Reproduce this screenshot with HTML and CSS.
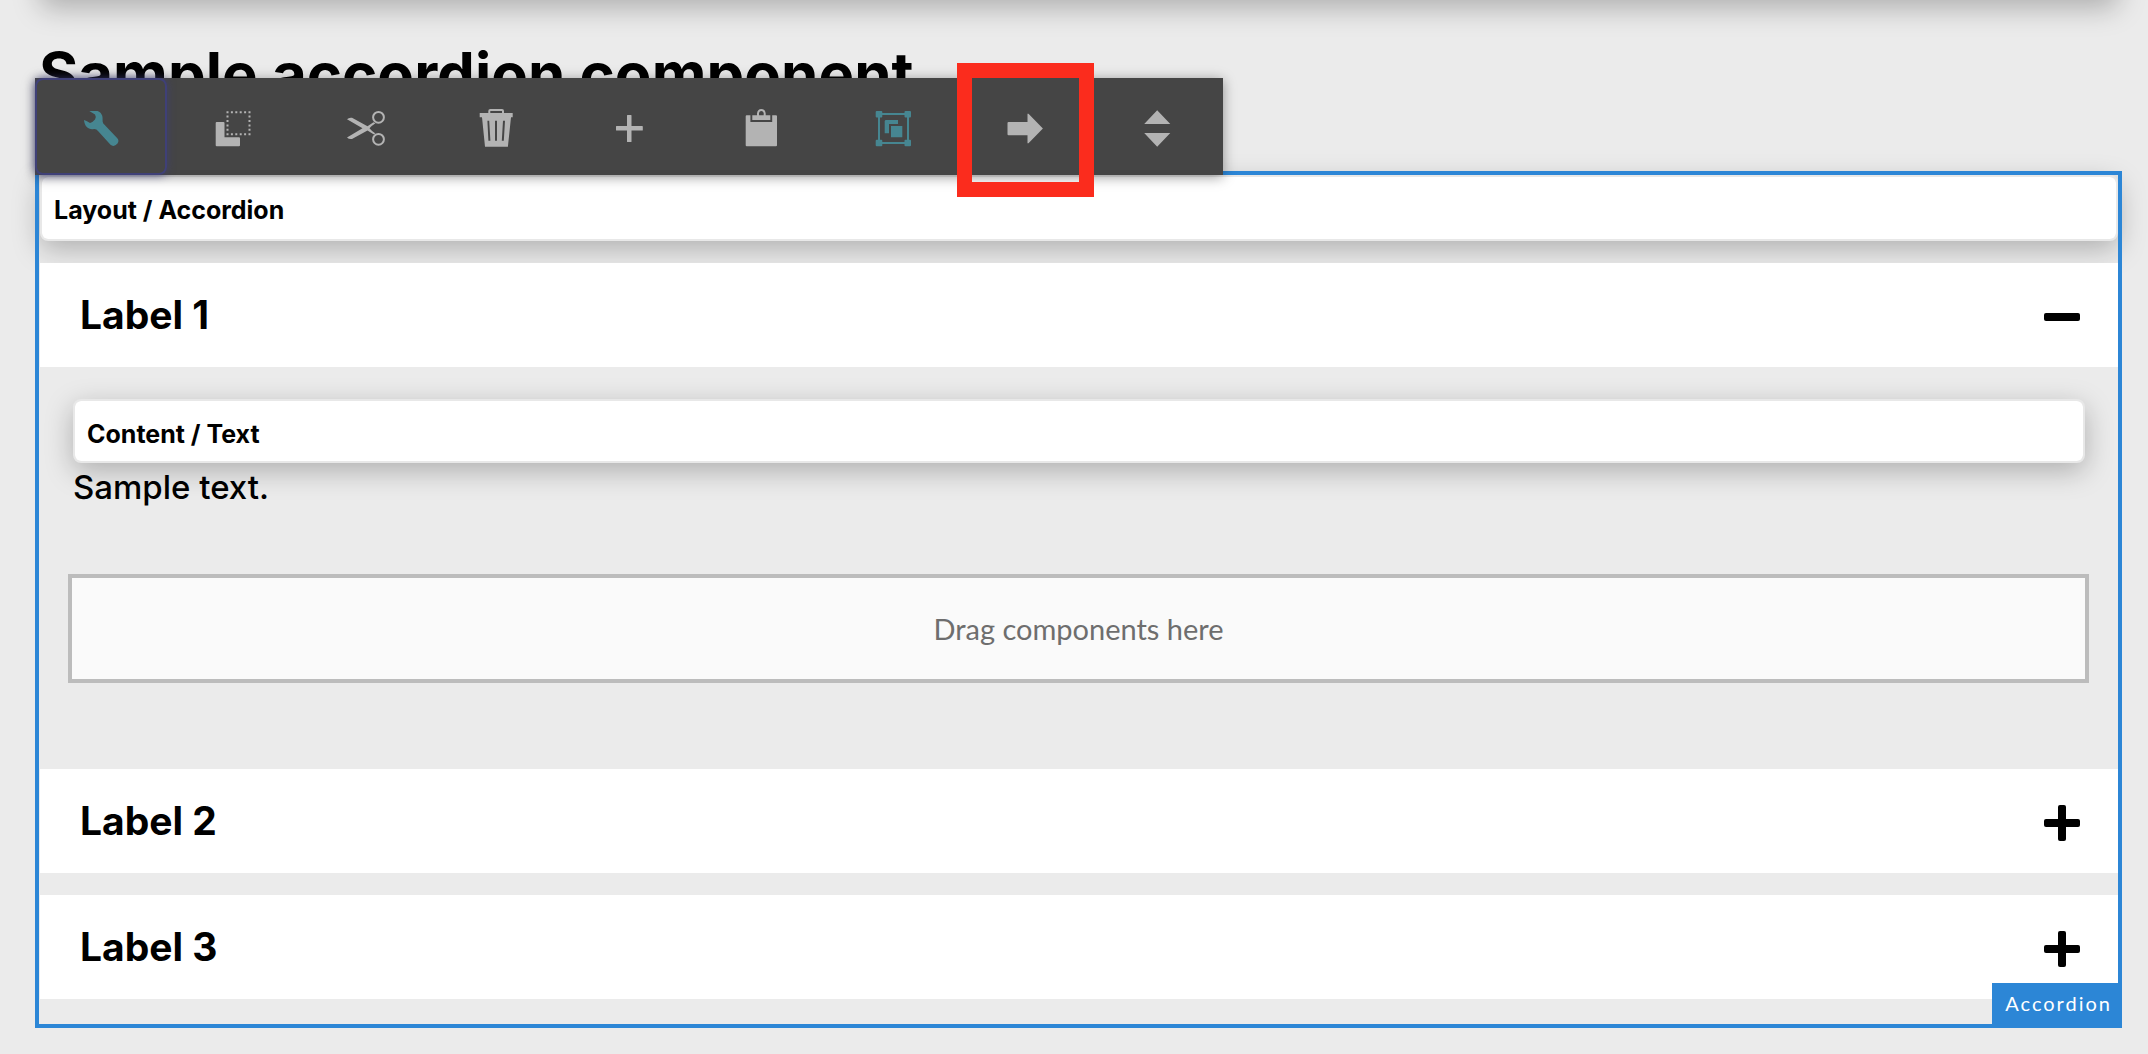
FILE: index.html
```
<!DOCTYPE html>
<html lang="en">

<head>
    <meta charset="utf-8">
    <title>Sample accordion component</title>
    <meta name="viewport" content="width=device-width, initial-scale=1.0">
    <link rel="stylesheet" href="styles.css">
</head>

<body>
    <div class="previous-card"></div>
    <h1 class="title">Sample accordion component</h1>

    <main class="frame">
        <div class="toolbar" role="toolbar" aria-label="Component actions">
            <button class="tool active focused" aria-label="Configure">
                <svg viewBox="0 0 40 40"><path d="M8.3 3H15.500C18.500 3 20.500 5.500 21.300 8C22 10.500 21 13 22.300 15.500L36.300 30.300Q38.500 32.500 36.500 35.500Q33 39.500 29.500 36.800L17 23Q15.500 20.800 13 21C7.500 22 3.500 18.500 3 12Q6 13.200 9 14.900Q11.500 14.500 14 11.500Q15.500 8.500 14 6.500Z"/></svg>
            </button>
            <button class="tool" aria-label="Copy">
                <svg viewBox="0 0 40 40"><path d="M3.700 14H10.500Q11.500 14 11.500 15V29.300H26Q27 29.300 27 30.300V37.300Q27 38.300 26 38.300H3.700Q2.700 38.300 2.700 37.300V15Q2.700 14 3.700 14Z"/><rect class="line" x="14.500" y="4.200" width="22" height="22" stroke-dasharray="2 2.400" stroke-dashoffset="1"/></svg>
            </button>
            <button class="tool" aria-label="Cut">
                <svg viewBox="0 0 40 40"><circle class="line" cx="33.500" cy="9.300" r="5.400"/><circle class="line" cx="33.500" cy="31.300" r="5.400"/><path d="M2 11.200Q4 9.300 7 9.800L22.500 18.300L28.500 14.300L30.500 15.200Q26 18 24.500 20.300Q26 22.600 30.500 25.400L28.500 26.300L22.500 22.500L7 31Q4 31.500 2 29.600L17.500 20.300Z"/></svg>
            </button>
            <button class="tool" aria-label="Delete">
                <svg viewBox="0 0 40 40"><path class="line" d="M12.300 5V3Q12.300 2 13.300 2H25Q26 2 26 3V5"/><path fill-rule="evenodd" d="M2.700 5H35.700V9.300H34L30.900 38.700H8L5 9.300H2.700ZM10.400 12.800L11.400 32.800H13.400L12.200 12.800ZM18 12.800V32.800H20V12.800ZM26 12.800L24.800 32.800H26.800L28 12.800Z"/></svg>
            </button>
            <button class="tool" aria-label="Insert">
                <svg viewBox="0 0 40 40"><path d="M18 7.500Q18 7 18.500 7H22Q22.500 7 22.500 7.500V18H33.200Q33.800 18 33.800 18.500V22Q33.800 22.500 33.200 22.500H22.500V33.500Q22.500 34 22 34H18.500Q18 34 18 33.500V22.500H7.500Q7 22.500 7 22V18.500Q7 18 7.500 18H18Z"/></svg>
            </button>
            <button class="tool" aria-label="Paste">
                <svg viewBox="0 0 40 40"><path fill-rule="evenodd" d="M5.500 7.300H9.400V14H31.200V7.300H35Q36 7.300 36 8.300V37.300Q36 38.300 35 38.300H5.700Q4.700 38.300 4.700 37.300V8.300Q4.700 7.300 5.700 7.300ZM11.300 7.300H16V5.500Q16.500 1 20.300 1Q24.200 1 24.700 5.500V7.300H29.300V12H11.300ZM18 7.300H22.700V5Q22 3 20.300 3Q18.500 3 18 5Z"/></svg>
            </button>
            <button class="tool active" aria-label="Group">
                <svg viewBox="0 0 40 40"><rect class="line" x="6" y="6" width="29" height="29"/><path d="M3.700 3h4.600q1 0 1 1v4.500q0 1-1 1H3.700q-1 0-1-1V4q0-1 1-1ZM32.500 3h4.500q1 0 1 1v4.500q0 1-1 1h-4.500q-1 0-1-1V4q0-1 1-1ZM3.700 31.700h4.600q1 0 1 1v4.500q0 1-1 1H3.700q-1 0-1-1v-4.500q0-1 1-1ZM32.500 31.700h4.500q1 0 1 1v4.500q0 1-1 1h-4.500q-1 0-1-1v-4.500q0-1 1-1ZM12.500 12H25V16H16V25.300H11.700V13ZM18 18H29.300V29.300H18Z"/></svg>
            </button>
            <button class="tool highlighted" aria-label="Parent">
                <svg viewBox="0 0 40 40"><path d="M3.500 14H22.500V5.700H23.500L37.900 20.400L23.500 35.300H22.500V27.300H3.500Q2.500 27.300 2.500 26.300V15Q2.500 14 3.500 14Z"/></svg>
            </button>
            <button class="tool" aria-label="Reorder">
                <svg viewBox="0 0 40 40"><path d="M20.200 2.300L33.300 16H7.200ZM7.200 25H33.300L20.200 38.700Z"/></svg>
            </button>
        </div>

        <div class="tag tag-layout">Layout / Accordion</div>

        <div class="accordion">
            <button class="item" aria-expanded="true">
                Label 1
                <svg class="sign" viewBox="0 0 36 40"><rect y="18" width="36" height="8" rx="2"/></svg>
            </button>
            <div class="panel">
                <div class="tag tag-text">Content / Text</div>
                <p class="text">Sample text.</p>
                <div class="dropzone">Drag components here</div>
            </div>
            <button class="item" aria-expanded="false">
                Label 2
                <svg class="sign" viewBox="0 0 36 40"><rect y="18" width="36" height="8" rx="2"/><rect x="14" y="4" width="8" height="36" rx="2"/></svg>
            </button>
            <button class="item" aria-expanded="false">
                Label 3
                <svg class="sign" viewBox="0 0 36 40"><rect y="18" width="36" height="8" rx="2"/><rect x="14" y="4" width="8" height="36" rx="2"/></svg>
            </button>
        </div>

        <span class="badge">Accordion</span>
    </main>
</body>

</html>
```
FILE: styles.css
```
* {
    box-sizing: border-box;
    margin: 0;
    padding: 0;
}

body {
    display: flex;
    flex-direction: column;
    padding: 0 26px 26px 35px;
    background: #ebebeb;
    color: #000;
    font-family: Inter, "Liberation Sans", sans-serif;
}

button {
    border: none;
    font: inherit;
    color: inherit;
    cursor: pointer;
}

/* only the shadow of this card reaches into view */
.previous-card {
    height: 64px;
    margin: -64px 4px 0 5px;
    border-radius: 8px;
    box-shadow: 0 8px 28px rgba(0, 0, 0, 0.26);
}

.title {
    margin: 38px 0 61px 4px;
    font-size: 60px;
    line-height: 72px;
    font-weight: 700;
}

.frame {
    position: relative;
    padding: 4px 4px 29px 5px;
}

/* selection outline, drawn over the card shadows */
.frame::after {
    content: "";
    position: absolute;
    inset: 0;
    border: 4px solid #2c86d6;
    pointer-events: none;
}

.toolbar {
    position: absolute;
    z-index: 2;
    left: 0;
    bottom: calc(100% - 4px);
    display: flex;
    background: #454545;
    box-shadow: 0 2px 12px rgba(0, 0, 0, 0.4);
}

.tool {
    position: relative;
    display: flex;
    justify-content: center;
    width: 132px;
    height: 97px;
    padding-top: 30px;
    background: none;
    color: #b3b3b3;
}

.tool svg {
    width: 40px;
    height: 40px;
    fill: currentColor;
}

.tool .line {
    fill: none;
    stroke: currentColor;
    stroke-width: 2;
}

.tool.active {
    color: #468691;
}

.tool.focused {
    border-radius: 8px;
    box-shadow: inset 0 0 0 2px #3f4078, 0 0 8px rgba(63, 64, 120, 0.8);
}

.tool.highlighted::after {
    content: "";
    position: absolute;
    inset: -15px -3px -22px -2px;
    border: 15px solid #fb2c1d;
}

.tag {
    padding: 18px 12px 12px;
    background: #fff;
    background-clip: padding-box;
    border: 2px solid #e8e8e8;
    border-radius: 8px;
    box-shadow: 0 8px 28px rgba(0, 0, 0, 0.26);
    font-size: 25px;
    line-height: 30px;
    font-weight: 700;
}

.tag-layout {
    padding-bottom: 14px;
    margin-bottom: 22px;
}

.tag-text {
    margin: 0 4px 4px 5px;
}

.accordion {
    position: relative;
}

.item {
    display: flex;
    justify-content: space-between;
    align-items: center;
    width: 100%;
    height: 104px;
    padding: 0 38px 0 40px;
    background: #fff;
    font-size: 39px;
    line-height: 48px;
    font-weight: 700;
}

.item + .item {
    margin-top: 22px;
}

.sign {
    width: 36px;
    height: 40px;
}

.panel {
    padding: 32px 29px 86px 28px;
}

.text {
    margin: 0 5px 67px;
    font-size: 33px;
    line-height: 40px;
    font-weight: 500;
}

.dropzone {
    padding: 32px;
    border: 4px solid #bcbcbc;
    background: #fafafa;
    color: #6e6e6e;
    font-family: Lato, "Open Sans", sans-serif;
    font-size: 29px;
    line-height: 37px;
    text-align: center;
}

.badge {
    position: absolute;
    z-index: 1;
    right: 0;
    bottom: 0;
    padding: 8px 10px 13px 13px;
    background: #2c86d6;
    color: #fff;
    font-family: Lato, "Open Sans", sans-serif;
    font-size: 20px;
    line-height: 24px;
    letter-spacing: 2px;
}
```
